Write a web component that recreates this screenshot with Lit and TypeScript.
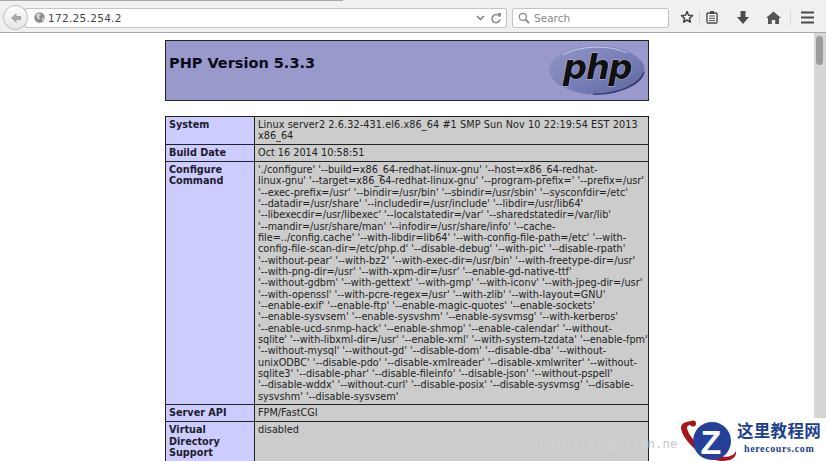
import { LitElement, html, css, svg } from "lit";
import { customElement } from "lit/decorators.js";

const CONFIG = [
  "'./configure' '--build=x86_64-redhat-linux-gnu' '--host=x86_64-redhat-",
  "linux-gnu' '--target=x86_64-redhat-linux-gnu' '--program-prefix=' '--prefix=/usr'",
  "'--exec-prefix=/usr' '--bindir=/usr/bin' '--sbindir=/usr/sbin' '--sysconfdir=/etc'",
  "'--datadir=/usr/share' '--includedir=/usr/include' '--libdir=/usr/lib64'",
  "'--libexecdir=/usr/libexec' '--localstatedir=/var' '--sharedstatedir=/var/lib'",
  "'--mandir=/usr/share/man' '--infodir=/usr/share/info' '--cache-",
  "file=../config.cache' '--with-libdir=lib64' '--with-config-file-path=/etc' '--with-",
  "config-file-scan-dir=/etc/php.d' '--disable-debug' '--with-pic' '--disable-rpath'",
  "'--without-pear' '--with-bz2' '--with-exec-dir=/usr/bin' '--with-freetype-dir=/usr'",
  "'--with-png-dir=/usr' '--with-xpm-dir=/usr' '--enable-gd-native-ttf'",
  "'--without-gdbm' '--with-gettext' '--with-gmp' '--with-iconv' '--with-jpeg-dir=/usr'",
  "'--with-openssl' '--with-pcre-regex=/usr' '--with-zlib' '--with-layout=GNU'",
  "'--enable-exif' '--enable-ftp' '--enable-magic-quotes' '--enable-sockets'",
  "'--enable-sysvsem' '--enable-sysvshm' '--enable-sysvmsg' '--with-kerberos'",
  "'--enable-ucd-snmp-hack' '--enable-shmop' '--enable-calendar' '--without-",
  "sqlite' '--with-libxml-dir=/usr' '--enable-xml' '--with-system-tzdata' '--enable-fpm'",
  "'--without-mysql' '--without-gd' '--disable-dom' '--disable-dba' '--without-",
  "unixODBC' '--disable-pdo' '--disable-xmlreader' '--disable-xmlwriter' '--without-",
  "sqlite3' '--disable-phar' '--disable-fileinfo' '--disable-json' '--without-pspell'",
  "'--disable-wddx' '--without-curl' '--disable-posix' '--disable-sysvmsg' '--disable-",
  "sysvshm' '--disable-sysvsem'",
];

const ROWS: { k: string[]; v: string[]; wide?: boolean }[] = [
  { k: ["System"], v: ["Linux server2 2.6.32-431.el6.x86_64 #1 SMP Sun Nov 10 22:19:54 EST 2013", "x86_64"], wide: true },
  { k: ["Build Date"], v: ["Oct 16 2014 10:58:51"] },
  { k: ["Configure", "Command"], v: CONFIG },
  { k: ["Server API"], v: ["FPM/FastCGI"] },
  { k: ["Virtual", "Directory", "Support"], v: ["disabled"] },
];

@customElement("app-root")
export class AppRoot extends LitElement {
  static styles = css`
    :host { display: block; width: 826px; height: 461px; overflow: hidden; position: relative; background: #fff; font-family: "DejaVu Sans", sans-serif; color: #111; }
    .toolbar { height: 33px; box-sizing: border-box; background: #f0f0f0; border-bottom: 1px solid #a9a9a9; display: flex; align-items: center; padding: 3px 0 0 3px; position: relative; }
    .tabline { position: absolute; left: 0; top: 0; width: 343px; height: 1px; background: #a8a8a8; }
    .back { width: 25px; height: 25px; box-sizing: border-box; border-radius: 50%; border: 1px solid #bdbdbd; background: linear-gradient(#fdfdfd, #e6e6e6); display: flex; align-items: center; justify-content: center; flex: none; z-index: 1; }
    .url { margin-left: -3px; width: 482px; height: 20px; box-sizing: border-box; background: #fff; border: 1px solid #c4c4c4; border-radius: 0 2px 2px 0; display: flex; align-items: center; padding: 0 4px 0 8px; font-size: 10.5px; letter-spacing: .3px; color: #444; flex: none; }
    .url .addr { flex: 1; margin-left: 3px; }
    .search { margin-left: 5px; width: 157px; height: 20px; box-sizing: border-box; background: #fff; border: 1px solid #c4c4c4; border-radius: 2px; display: flex; align-items: center; padding-left: 5px; font-size: 10.5px; color: #8a8a8a; gap: 4px; flex: none; }
    .tools { display: flex; align-items: center; flex: none; margin-left: 11px; }
    .sep { width: 1px; height: 15px; background: #d8d8d8; }
    .main { display: flex; height: 428px; }
    .page { flex: 1; min-width: 0; display: flex; flex-direction: column; align-items: center; padding: 7px 0 0 0; box-sizing: border-box; }
    .wrap { width: 484px; display: flex; flex-direction: column; gap: 15px; }
    .head { height: 61px; box-sizing: border-box; background: #9999cc; border: 1px solid #222233; display: flex; justify-content: space-between; padding: 0 3px 0 3px; }
    .head h1 { margin: 13px 0 0; font-size: 14.5px; line-height: 18px; font-weight: bold; color: #0a0a1a; }
    .logo { margin-top: 4px; }
    table { border-collapse: collapse; width: 484px; table-layout: fixed; font-size: 9.7px; line-height: 11.35px; color: #222; }
    td { border: 1px solid #222; padding: 2px 3px 2.4px 3px; vertical-align: top; }
    td.k { width: 82px; background: #ccccff; font-weight: bold; color: #1c1c2c; }
    td.v { background: #cccccc; }
    td.wide div:first-child { letter-spacing: .09px; }
    td div { white-space: nowrap; }
    .scroll { width: 12px; background: #d6d6d6; flex: none; box-sizing: border-box; padding: 3px 0 0 2px; }
    .thumb { width: 7px; height: 29px; background: #9c9c9c; border-radius: 4px; }
    .mark { position: absolute; right: 0; bottom: 0; width: 143px; height: 43px; background: #fff; display: block; }
    .wm { position: absolute; left: 535px; top: 438px; font: 12.5px/14px "Liberation Mono", monospace; color: #d1d1d1; white-space: nowrap; }
    .wm span { color: #c8c8c8; }
    .zh { position: absolute; left: 737px; top: 421px; font: bold 16.5px/19px "Noto Sans CJK SC", sans-serif; color: #1c3f8f; letter-spacing: .3px; white-space: nowrap; }
    .en { position: absolute; left: 744px; top: 443px; font: bold 10px/12px "Liberation Serif", serif; color: #1c3f8f; letter-spacing: .62px; white-space: nowrap; }
  `;

  private icon(w: number, content: unknown, ml = 0) {
    return html`<svg width=${w} height="18" viewBox="0 0 ${w} 18" style="margin-left:${ml}px;display:block">${content}</svg>`;
  }

  render() {
    return html`
      <div class="toolbar">
        <div class="tabline"></div>
        <div class="back">
          <svg width="14" height="14" viewBox="0 0 14 14"><path d="M7.500 2 2 7l5.500 5V9H12V5H7.500z" fill="#a6a6a6"/></svg>
        </div>
        <div class="url">
          <svg width="11" height="11" viewBox="0 0 11 11"><circle cx="5.500" cy="5.500" r="5.200" fill="#8c8c8c"/><path d="M2 3c1-1 3-2 4-1.500L7 3 5 4 6 6 4.500 8 3 5.500zM8 6l2-1-.5 3L8 9z" fill="#d4d4d4"/></svg>
          <span class="addr">172.25.254.2</span>
          <svg width="9" height="8" viewBox="0 0 9 8"><path d="M1 2l3.500 3.500L8 2" fill="none" stroke="#777" stroke-width="1.400"/></svg>
          <svg style="margin-left:5px" width="12" height="12" viewBox="0 0 12 12"><path d="M9.500 4.500A4 4 0 1 0 10 7.500" fill="none" stroke="#888" stroke-width="1.500"/><path d="M7 1l4 0 0 4z" fill="#888"/></svg>
        </div>
        <div class="search">
          <svg width="12" height="12" viewBox="0 0 12 12"><circle cx="4.800" cy="4.800" r="3.500" fill="none" stroke="#8a8a8a" stroke-width="1.300"/><path d="M7.500 7.500 11 11" stroke="#8a8a8a" stroke-width="1.800"/></svg>
          <span>Search</span>
        </div>
        <div class="tools">
          ${this.icon(14, svg`<path d="M7 2.500l1.500 3.800 4 .3-3.100 2.600 1 4L7 11l-3.400 2.200 1-4L1.500 6.600l4-.3z" fill="#fff" stroke="#444" stroke-width="1.500" stroke-linejoin="round"/>`)}
          <div class="sep" style="margin-left:5px"></div>
          ${this.icon(12, svg`<rect x="1" y="4" width="10" height="10" rx="1" fill="#fff" stroke="#4a4a4a" stroke-width="1.400"/><path d="M3 7h6M3 9.300h6M3 11.600h6" stroke="#4a4a4a"/><rect x="4" y="2" width="4" height="3" fill="#4a4a4a"/>`, 6)}
          ${this.icon(14, svg`<path d="M4.500 2h5v6H13L7 15 1 8h3.500z" fill="#4c4c4c"/>`, 18)}
          ${this.icon(15, svg`<path d="M7.500 2.500 15 9h-2v6H9.200v-4H5.800v4H2V9H0z" fill="#555"/>`, 16)}
          <div class="sep" style="margin-left:9px"></div>
          ${this.icon(13, svg`<path d="M0 3.500h13M0 8.500h13M0 13.500h13" stroke="#4a4a4a" stroke-width="2.200"/>`, 10)}
        </div>
      </div>
      <div class="main">
        <div class="page">
          <div class="wrap">
            <div class="head">
              <h1>PHP Version 5.3.3</h1>
              <svg class="logo" width="96" height="50" viewBox="0 0 96 50">
                <defs><linearGradient id="g" x1="0" y1="0" x2="1" y2="1"><stop offset="0" stop-color="#9297c8"/><stop offset=".6" stop-color="#757bb4"/><stop offset="1" stop-color="#5c6299"/></linearGradient></defs>
                <ellipse cx="48" cy="25" rx="47.500" ry="24.500" fill="url(#g)"/>
                <path d="M14 10C28 1 60-1 78 8" fill="none" stroke="#c8cbe6" stroke-width="1"/>
                <path d="M95 27C92 40 66 50 44 49" fill="none" stroke="#2c3060" stroke-width="1.200"/>
                <text x="48" y="34" text-anchor="middle" font-family="'DejaVu Sans', sans-serif" font-style="italic" font-weight="bold" font-size="34" letter-spacing="-1.500" fill="#111" stroke="#eef" stroke-width=".6" paint-order="stroke">php</text>
              </svg>
            </div>
            <table>
              ${ROWS.map(
                (r) => html`<tr>
                  <td class="k">${r.k.map((l) => html`<div>${l}</div>`)}</td>
                  <td class="v ${r.wide ? "wide" : ""}">${r.v.map((l) => html`<div>${l}</div>`)}</td>
                </tr>`
              )}
            </table>
          </div>
        </div>
        <div class="scroll"><div class="thumb"></div></div>
      </div>
      <div class="wm">http://blog.csd<span>n.ne</span></div>
      <div class="mark"></div>
      <svg style="position:absolute;left:680px;top:420px" width="58" height="41" viewBox="0 0 58 41">
        <path d="M1 8C1 3 6 1 14 1l1 3C11 4 7 5 7 8c2 10 16 24 32 28 8 2 15 0 17-5 1 6-4 10-14 10C24 41 2 20 1 8z" fill="#a5151b"/>
        <circle cx="13" cy="3.500" r="3" fill="#a5151b"/>
        <circle cx="32" cy="21" r="19" fill="#24409a"/>
        <text x="31" y="34" text-anchor="middle" font-family="'Liberation Sans', sans-serif" font-weight="bold" font-size="34" fill="#fff">Z</text>
      </svg>
      <div class="zh">这里教程网</div>
      <div class="en">herecours.com</div>
    `;
  }
}
